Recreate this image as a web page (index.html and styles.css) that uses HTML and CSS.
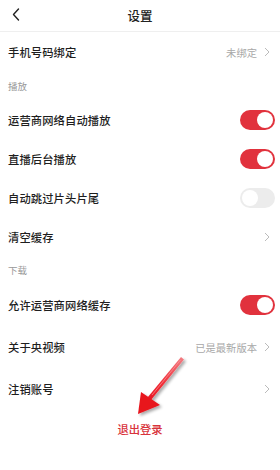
FILE: index.html
```html
<!DOCTYPE html>
<html lang="zh-CN">
<head>
<meta charset="utf-8">
<title>设置</title>
<link rel="stylesheet" href="styles.css">
</head>
<body>
<div class="page">
  <header class="header">
    <svg class="back" width="8" height="13" viewBox="0 0 8 13"><path d="M6.5 1 L1.5 6.5 L6.5 12" fill="none" stroke="#222" stroke-width="1.4" stroke-linecap="round" stroke-linejoin="round"/></svg>
    <div class="title">设置</div>
  </header>

  <div class="row r40">
    <span class="label">手机号码绑定</span>
    <span class="right"><span class="value">未绑定</span><svg class="chev" width="6" height="10" viewBox="0 0 6 10"><path d="M1 1 L5 5 L1 9" fill="none" stroke="#bbb" stroke-width="1"/></svg></span>
  </div>

  <div class="section">播放</div>
  <div class="row r39">
    <span class="label">运营商网络自动播放</span>
    <span class="toggle on"><span class="knob"></span></span>
  </div>
  <div class="row r39">
    <span class="label">直播后台播放</span>
    <span class="toggle on"><span class="knob"></span></span>
  </div>
  <div class="row r39">
    <span class="label">自动跳过片头片尾</span>
    <span class="toggle"><span class="knob"></span></span>
  </div>
  <div class="row r39">
    <span class="label">清空缓存</span>
    <span class="right"><svg class="chev" width="6" height="10" viewBox="0 0 6 10"><path d="M1 1 L5 5 L1 9" fill="none" stroke="#bbb" stroke-width="1"/></svg></span>
  </div>

  <div class="section">下载</div>
  <div class="row r42">
    <span class="label">允许运营商网络缓存</span>
    <span class="toggle on"><span class="knob"></span></span>
  </div>
  <div class="row r42">
    <span class="label">关于央视频</span>
    <span class="right"><span class="value">已是最新版本</span><svg class="chev" width="6" height="10" viewBox="0 0 6 10"><path d="M1 1 L5 5 L1 9" fill="none" stroke="#bbb" stroke-width="1"/></svg></span>
  </div>
  <div class="row r42">
    <span class="label">注销账号</span>
    <span class="right"><svg class="chev" width="6" height="10" viewBox="0 0 6 10"><path d="M1 1 L5 5 L1 9" fill="none" stroke="#bbb" stroke-width="1"/></svg></span>
  </div>

  <div class="logout">退出登录</div>

  <svg class="annot" width="280" height="470" viewBox="0 0 280 470">
    <defs>
      <linearGradient id="ag" x1="182" y1="358" x2="140" y2="412" gradientUnits="userSpaceOnUse">
        <stop offset="0" stop-color="#f27a80"/>
        <stop offset="0.5" stop-color="#ef2a34"/>
        <stop offset="1" stop-color="#e0101c"/>
      </linearGradient>
      <filter id="sh" x="-30%" y="-30%" width="160%" height="160%">
        <feGaussianBlur in="SourceAlpha" stdDeviation="1.5"/>
        <feOffset dx="2" dy="2" result="b"/>
        <feComponentTransfer><feFuncA type="linear" slope="0.35"/></feComponentTransfer>
        <feMerge><feMergeNode/><feMergeNode in="SourceGraphic"/></feMerge>
      </filter>
    </defs>
    <g filter="url(#sh)">
      <polygon points="181,357 184,359.5 151,400 147.5,397.5" fill="url(#ag)"/>
      <polygon points="138,414 141,392 160,405" fill="#e8141f"/>
      <line x1="180.5" y1="360" x2="152" y2="395" stroke="#ff9ea2" stroke-width="0.8" stroke-opacity="0.8"/>
    </g>
  </svg>
</div>
</body>
</html>
```
FILE: styles.css
```css
* { box-sizing: border-box; }
html, body { margin: 0; padding: 0; background: #fff; }
body {
  font-family: "Noto Sans CJK SC", "Noto Sans", sans-serif;
  color: #222;
  width: 280px;
  height: 470px;
  overflow: hidden;
}
.page { position: relative; width: 280px; height: 470px; }
.header {
  height: 32px;
  display: flex;
  align-items: center;
  justify-content: center;
  border-bottom: 1px solid #efefef;
  position: relative;
}
.back { position: absolute; left: 12px; top: 8px; }
.title { font-size: 12.5px; font-weight: 500; color: #222; }
.row {
  display: flex;
  align-items: center;
  justify-content: space-between;
  padding: 0 5px 0 8px;
}
.r40 { height: 40px; }
.r39 { height: 39px; }
.r42 { height: 42px; }
.label { font-size: 11.3px; font-weight: 500; color: #1e1e1e; letter-spacing: 0.1px; }
.right { display: flex; align-items: center; gap: 7px; padding-right: 5px; }
.value { font-size: 10.3px; color: #a8a8a8; }
.chev { display: block; }
.section {
  height: 28px;
  display: flex;
  align-items: center;
  padding-left: 8px;
  font-size: 9.5px;
  color: #999;
}
.toggle {
  width: 35px;
  height: 20px;
  border-radius: 10px;
  background: #ececec;
  position: relative;
  display: block;
}
.toggle .knob {
  position: absolute;
  top: 2px;
  left: 2px;
  width: 16px;
  height: 16px;
  border-radius: 50%;
  background: #fff;
}
.toggle.on { background: #e1323d; }
.toggle.on .knob { left: 17px; }
.logout {
  height: 38px;
  display: flex;
  align-items: center;
  justify-content: center;
  font-size: 11.3px;
  color: #d8333b;
  font-weight: 500;
}
.annot { position: absolute; left: 0; top: 0; pointer-events: none; }
```
